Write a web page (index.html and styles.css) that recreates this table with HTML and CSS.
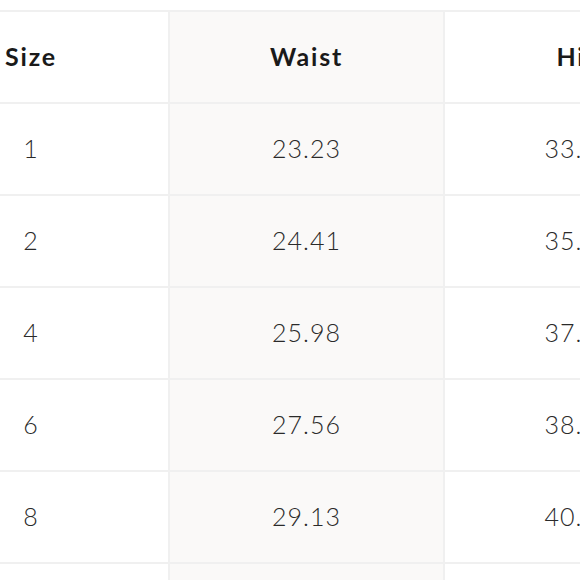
FILE: index.html
```html
<!DOCTYPE html>
<html>
<head>
<meta charset="utf-8">
<link rel="stylesheet" href="styles.css">
</head>
<body>
<div class="viewport">
<table class="size-table">
  <thead>
    <tr><th>Size</th><th class="alt">Waist</th><th>Hip</th></tr>
  </thead>
  <tbody>
    <tr><td>1</td><td class="alt">23.23</td><td>33.27</td></tr>
    <tr><td>2</td><td class="alt">24.41</td><td>35.24</td></tr>
    <tr><td>4</td><td class="alt">25.98</td><td>37.01</td></tr>
    <tr><td>6</td><td class="alt">27.56</td><td>38.58</td></tr>
    <tr><td>8</td><td class="alt">29.13</td><td>40.16</td></tr>
    <tr><td>10</td><td class="alt">30.71</td><td>41.73</td></tr>
  </tbody>
</table>
</div>
</body>
</html>
```

FILE: styles.css
```css
html, body {
  margin: 0;
  padding: 0;
  background: #ffffff;
}
.viewport {
  width: 580px;
  height: 580px;
  overflow: hidden;
}
.size-table {
  width: 821px;
  min-width: 821px;
  margin-top: 10px;
  margin-left: -106px;
  border-collapse: separate;
  border-spacing: 0;
  border-top: 2px solid #f0f0f0;
  font-family: "Lato", "Liberation Sans", sans-serif;
  table-layout: fixed;
}
.size-table th,
.size-table td {
  height: 88px;
  padding: 0 0 2px 0;
  text-align: center;
  vertical-align: middle;
  border-bottom: 2px solid #f0f0f0;
  border-right: 2px solid #f0f0f0;
}
.size-table th:nth-child(1),
.size-table td:nth-child(1) {
  width: 274px;
}
.size-table th:nth-child(2),
.size-table td:nth-child(2) {
  width: 273px;
}
.size-table th:nth-child(3),
.size-table td:nth-child(3) {
  width: 268px;
}
.size-table th {
  font-size: 25px;
  font-weight: 700;
  color: #1a1a1a;
  letter-spacing: 1.8px;
}
.size-table td {
  font-size: 25px;
  font-weight: 300;
  color: #2a2a2a;
  letter-spacing: 1px;
}
.size-table .alt {
  background: #faf9f8;
}
```
